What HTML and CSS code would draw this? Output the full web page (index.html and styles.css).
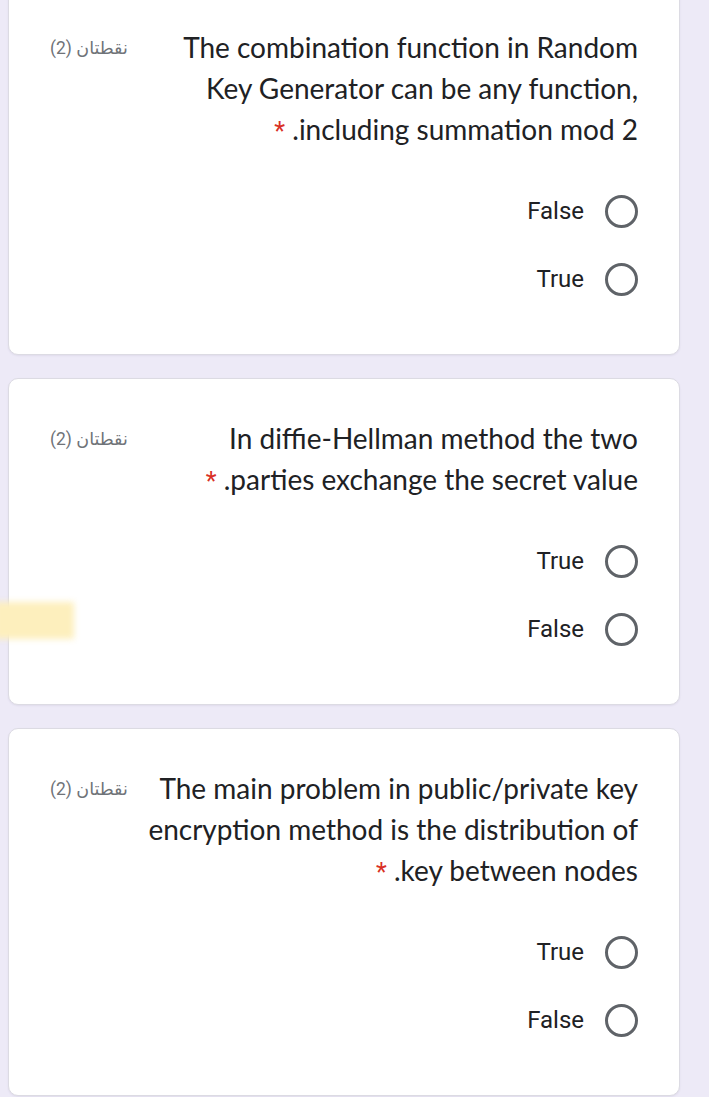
FILE: index.html
```html
<!DOCTYPE html>
<html lang="ar" dir="rtl">
<head>
<meta charset="utf-8">
<link rel="stylesheet" href="styles.css">
</head>
<body>
<div class="page">
  <div class="card">
    <div class="head">
      <div class="title">The combination function in Random<br>Key Generator can be any function,&lrm;<br>including summation mod 2. <span class="req">*</span></div>
      <div class="points">نقطتان (2)</div>
    </div>
    <div class="options">
      <div class="opt"><span class="radio"></span><span class="label">False</span></div>
      <div class="opt"><span class="radio"></span><span class="label">True</span></div>
    </div>
  </div>

  <div class="card">
    <div class="head">
      <div class="title">In diffie-Hellman method the two<br>parties exchange the secret value. <span class="req">*</span></div>
      <div class="points">نقطتان (2)</div>
    </div>
    <div class="options">
      <div class="opt"><span class="radio"></span><span class="label">True</span></div>
      <div class="opt"><span class="radio"></span><span class="label">False</span></div>
    </div>
  </div>

  <div class="card">
    <div class="head">
      <div class="title">The main problem in public/private key<br>encryption method is the distribution of<br>key between nodes. <span class="req">*</span></div>
      <div class="points">نقطتان (2)</div>
    </div>
    <div class="options">
      <div class="opt"><span class="radio"></span><span class="label">True</span></div>
      <div class="opt"><span class="radio"></span><span class="label">False</span></div>
    </div>
  </div>
</div>
<div class="highlight"></div>
</body>
</html>
```

FILE: styles.css
```css
html, body {
  margin: 0;
  padding: 0;
  background: #edeaf7;
}
body {
  width: 709px;
  height: 1097px;
  overflow: hidden;
  position: relative;
  font-family: Roboto, "Noto Sans", sans-serif;
}
.page {
  width: 672px;
  margin-top: -13px;
  margin-left: 8px;
  margin-right: auto;
  display: flex;
  flex-direction: column;
  gap: 23px;
}
.card {
  width: 672px;
  box-sizing: border-box;
  background: #fff;
  border: 1px solid #dcdbe3;
  border-radius: 10px;
  box-shadow: 0 1px 2px rgba(60, 50, 100, 0.08);
  padding: 39px 41px 41px 41px;
}
.head {
  display: flex;
  flex-direction: row;
  align-items: flex-start;
  gap: 16px;
}
.title {
  flex: 1;
  font-family: Lato, "Open Sans", sans-serif;
  font-size: 28px;
  line-height: 41px;
  color: #202124;
  text-align: right;
  white-space: nowrap;
}
.req {
  color: #d93025;
  font-family: Roboto, sans-serif;
  font-size: 25px;
  line-height: 10px;
}
.points {
  font-family: Roboto, "DejaVu Sans", sans-serif;
  font-size: 17.5px;
  line-height: 41px;
  color: #6f7378;
  white-space: nowrap;
  padding-top: 1px;
}
.options {
  margin-top: 27px;
  display: flex;
  flex-direction: column;
}
.opt {
  height: 68px;
  display: flex;
  align-items: center;
  gap: 21px;
}
.radio {
  width: 27px;
  height: 27px;
  border: 3px solid #5f6368;
  border-radius: 50%;
  flex: none;
}
.label {
  font-family: Roboto, sans-serif;
  font-size: 24px;
  color: #202124;
}
.highlight {
  position: absolute;
  left: -6px;
  top: 602px;
  width: 80px;
  height: 37px;
  background: #fdefbd;
  filter: blur(3px);
}
```
